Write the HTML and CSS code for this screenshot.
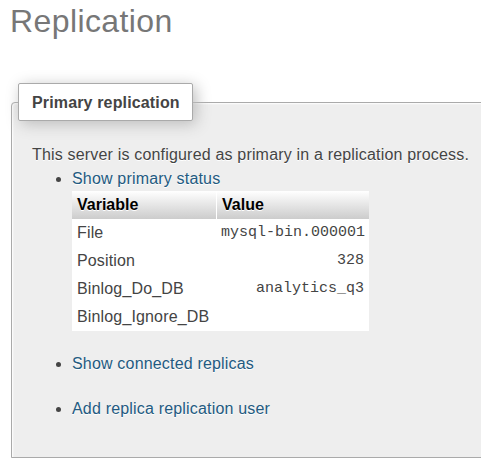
FILE: index.html
```
<!DOCTYPE html>
<html lang="en">
<head>
<meta charset="utf-8">
<title>Replication</title>
<link rel="stylesheet" href="styles.css">
</head>
<body>
<div class="page">
  <h2 class="page-title">Replication</h2>
  <fieldset class="pma-fieldset">
    <legend class="fs-legend">Primary replication</legend>
    <div class="fs-body">
      <p class="intro">This server is configured as primary in a replication process.</p>
      <ul class="actions">
        <li class="action">
          <a href="#" class="action-link">Show primary status</a>
          <table class="status-table">
            <colgroup><col class="col-var"><col class="col-val"></colgroup>
            <thead>
              <tr><th class="th-var">Variable</th><th class="th-val">Value</th></tr>
            </thead>
            <tbody>
              <tr><td>File</td><td class="val">mysql-bin.000001</td></tr>
              <tr><td>Position</td><td class="val">328</td></tr>
              <tr><td>Binlog_Do_DB</td><td class="val">analytics_q3</td></tr>
              <tr><td>Binlog_Ignore_DB</td><td class="val"></td></tr>
            </tbody>
          </table>
        </li>
        <li class="action after-table"><a href="#" class="action-link">Show connected replicas</a></li>
        <li class="action spaced"><a href="#" class="action-link">Add replica replication user</a></li>
      </ul>
    </div>
  </fieldset>
</div>
</body>
</html>
```
FILE: styles.css
```
html, body {
  margin: 0;
  padding: 0;
  background: #fff;
}
body {
  font-family: "Liberation Sans", Arial, sans-serif;
  font-size: 16px;
  line-height: 18px;
  color: #444;
  overflow: hidden;
}
.page {
  padding: 3px 0 0 11px;
  overflow: hidden;
}
.page-title {
  margin: 0 0 0 -1px;
  font-size: 32px;
  line-height: 37px;
  font-weight: normal;
  letter-spacing: 0.4px;
  color: #777;
  text-shadow: 0 1px 0 #fff;
}
.pma-fieldset {
  margin: 43px -40px 0 0;
  padding: 25px 0 39px 6px;
  border: 1px solid #aaa;
  border-radius: 4px 4px 0 0;
  background: #eee;
  box-shadow: 1px 1px 2px #fff inset;
  text-shadow: 0 1px 0 #fff;
}
.fs-legend {
  box-sizing: border-box;
  width: 175px;
  padding: 10px 0 8px 13px;
  font-weight: bold;
  color: #444;
  background: #fff;
  border: 1px solid #aaa;
  border-radius: 2px;
  box-shadow: 3px 3px 15px #bbb;
  text-shadow: none;
  letter-spacing: 0.15px;
}
.fs-body {
  padding-left: 14px;
  letter-spacing: 0.18px;
}
.intro {
  margin: 0;
}
.actions {
  margin: 6px 0 0 0;
  padding-left: 40px;
  list-style: disc;
}
.action-link {
  color: #235a81;
  text-decoration: none;
}
.after-table {
  margin-top: 24px;
}
.spaced {
  margin-top: 27px;
}
.status-table {
  margin-top: 3px;
  border-collapse: separate;
  border-spacing: 0;
  table-layout: fixed;
  width: 297px;
  background: #fff;
  letter-spacing: 0;
}
.col-var { width: 144px; }
.col-val { width: 153px; }
.status-table th,
.status-table td {
  padding: 5px 5px;
  height: 18px;
  line-height: 18px;
  text-align: left;
  vertical-align: top;
  white-space: nowrap;
}
.status-table th {
  font-weight: bold;
  color: #000;
  background: linear-gradient(#fff, #ccc);
  text-shadow: 0 1px 0 #fff;
}
.status-table .th-val {
  border-left: 1px solid #fff;
}
.status-table td {
  color: #444;
  letter-spacing: 0.15px;
}
.status-table td.val {
  text-align: right;
  font-family: "Liberation Mono", "DejaVu Sans Mono", monospace;
  font-size: 15px;
  letter-spacing: 0;
}
```
